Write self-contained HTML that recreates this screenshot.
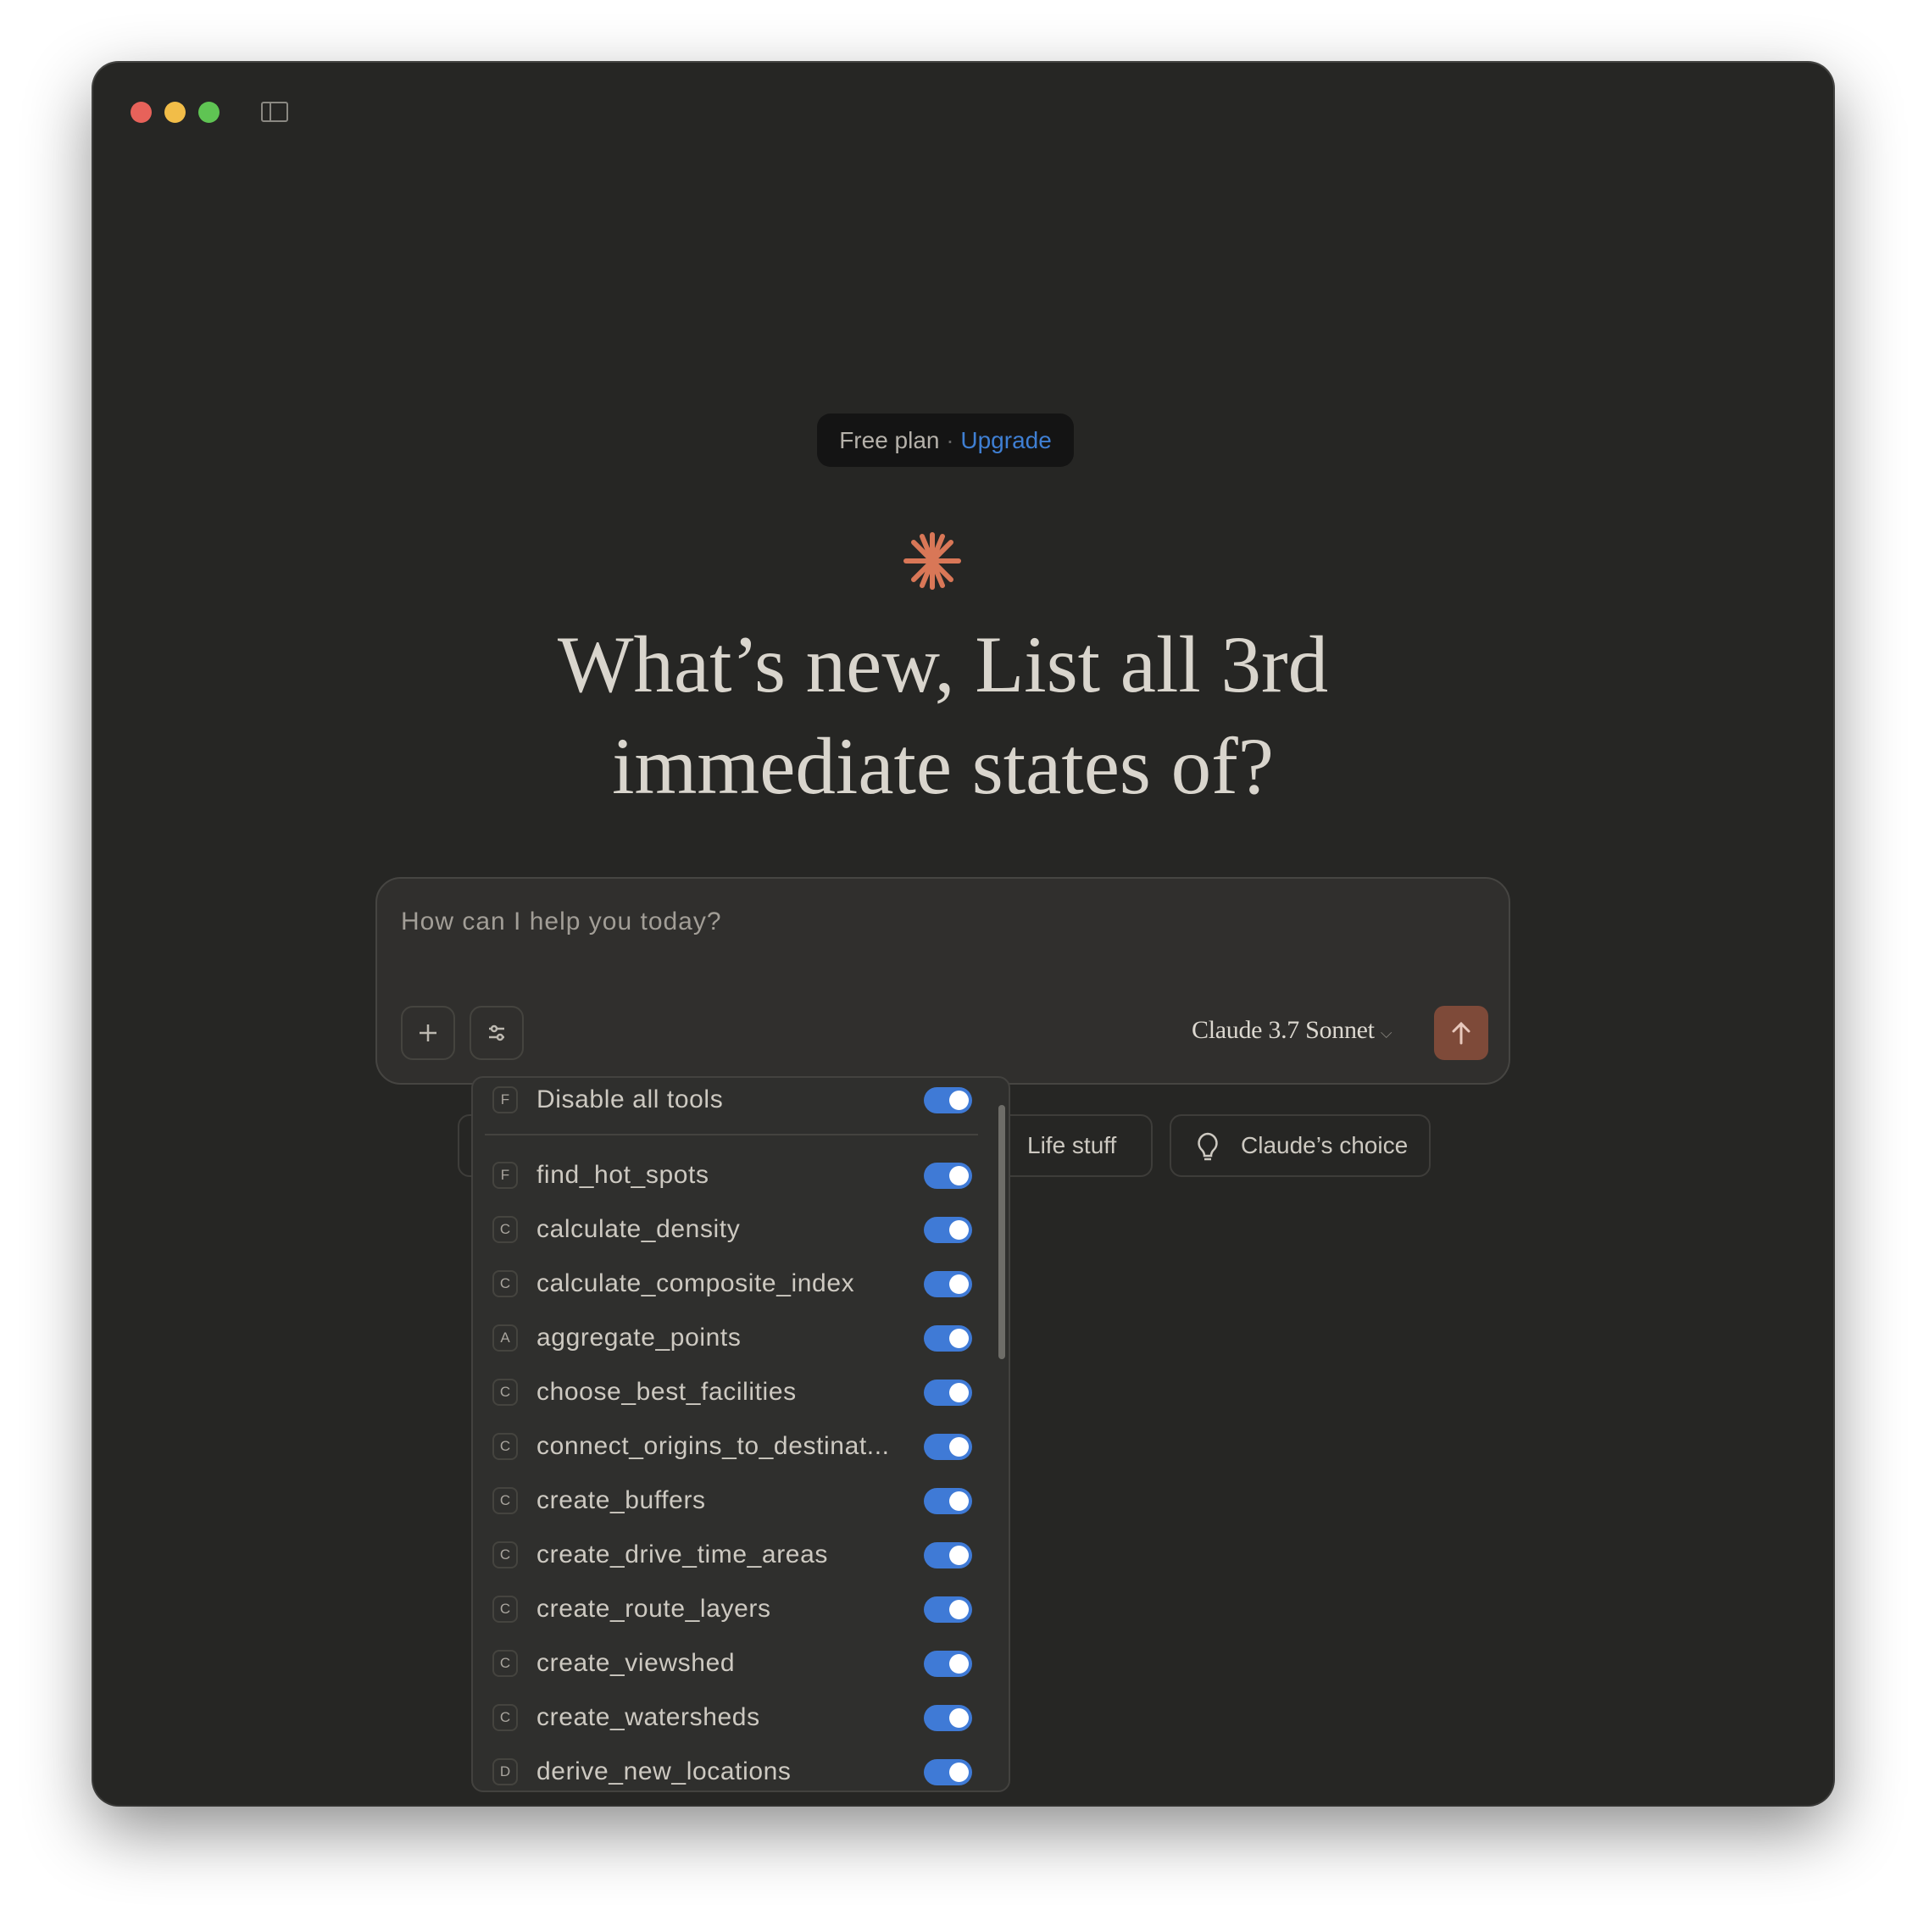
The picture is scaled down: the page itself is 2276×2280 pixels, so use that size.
<!DOCTYPE html>
<html><head><meta charset="utf-8"><style>
*{margin:0;padding:0;box-sizing:border-box}
body{width:2276px;height:2280px;background:#fff;position:relative;overflow:hidden;font-family:"Liberation Sans",sans-serif}
.win{position:absolute;left:110px;top:74px;width:2053px;height:2056px;background:#262624;border-radius:30px;box-shadow:0 30px 80px rgba(0,0,0,.45),0 0 0 2px #4a4a48;overflow:hidden}
.a{position:absolute}
.dot{position:absolute;width:25px;height:25px;border-radius:50%;top:46px}
.pill{left:854px;top:414px;width:303px;height:63px;background:#141414;border-radius:16px;color:#b5b1aa;font-size:28px;line-height:63px;text-align:center;white-space:nowrap}
h1{position:absolute;left:-24px;width:2053px;text-align:center;font-family:"Liberation Serif",serif;font-weight:400;font-size:95px;line-height:120px;color:#d9d5cd;top:650px;white-space:nowrap}
.box{left:333px;top:961px;width:1339px;height:245px;background:#302f2d;border:2px solid #464542;border-radius:30px}
.btn{position:absolute;width:64px;height:64px;border:2px solid #45443f;border-radius:14px}
.dd{left:446px;top:1196px;width:636px;height:845px;background:#2f2f2d;border:2px solid #43423f;border-radius:14px;overflow:hidden}
.row{position:absolute;left:0;width:600px;height:50px}
.bd{position:absolute;left:23px;top:10px;width:30px;height:32px;border:2px solid #45443f;border-radius:8px;color:#a9a59e;font-size:17px;text-align:center;line-height:28px}
.tx{position:absolute;left:75px;top:0;line-height:52px;font-size:30px;letter-spacing:0.6px;color:#cdc9c1;white-space:nowrap}
.tg{position:absolute;left:532px;top:11px;width:57px;height:31px;border-radius:16px;background:#3f7ad6}
.tg:after{content:"";position:absolute;right:4px;top:4px;width:23px;height:23px;border-radius:50%;background:#fff}
.chip{position:absolute;top:1241px;height:74px;border:2px solid #3e3d3a;border-radius:14px;color:#cdc9c1;font-size:28px;line-height:70px;white-space:nowrap}
</style></head><body>
<div class="win">
<div class="dot" style="left:44px;background:#e7625a"></div>
<div class="dot" style="left:84px;background:#f2bd48"></div>
<div class="dot" style="left:124px;background:#5fc453"></div>
<div class="a" style="left:198px;top:46px;width:32px;height:24px;border:2px solid #8a8882;border-radius:3px"><div style="position:absolute;left:8px;top:0;width:2px;height:20px;background:#8a8882"></div></div>

<div class="a pill">Free plan <span style="color:#666">·</span> <span style="color:#3f7fd3">Upgrade</span></div>

<svg class="a" style="left:956px;top:554px" width="68" height="68" viewBox="-34 -34 68 68">
<g stroke="#d97757" stroke-width="6" stroke-linecap="round">
<line x1="0" y1="-31" x2="0" y2="31"/><line x1="-31" y1="0" x2="31" y2="0"/>
<line x1="-22" y1="-22" x2="22" y2="22"/><line x1="22" y1="-22" x2="-22" y2="22"/>
<line x1="-12" y1="-29" x2="12" y2="29"/><line x1="12" y1="-29" x2="-12" y2="29"/>
</g></svg>

<h1>What’s new, List all 3rd<br>immediate states of?</h1>

<div class="chip" style="left:430px;width:300px"></div>
<div class="chip" style="left:1000px;width:250px;padding-left:100px">Life stuff</div>
<div class="chip" style="left:1270px;width:308px;padding-left:82px">
<svg class="a" style="left:28px;top:18px" width="30" height="38" viewBox="0 0 30 38"><path d="M15 3a11 11 0 0 0-7 19c2 2 3 4 3 7h8c0-3 1-5 3-7a11 11 0 0 0-7-19zM11 33h8" fill="none" stroke="#cdc9c1" stroke-width="2.5"/></svg>Claude’s choice</div>

<div class="a box">
<div class="a" style="left:28px;top:34px;font-size:30px;letter-spacing:1px;color:#a29e97;white-space:nowrap">How can I help you today?</div>
<div class="btn" style="left:28px;top:150px"><svg width="60" height="60" viewBox="0 0 60 60"><path d="M30 20v20M20 30h20" stroke="#bdb9b1" stroke-width="2.5"/></svg></div>
<div class="btn" style="left:109px;top:150px"><svg width="60" height="60" viewBox="0 0 60 60"><path d="M21 25h18M21 35h18" stroke="#bdb9b1" stroke-width="2.5"/><circle cx="27" cy="25" r="3" fill="#302f2d" stroke="#bdb9b1" stroke-width="2.5"/><circle cx="34" cy="35" r="3" fill="#302f2d" stroke="#bdb9b1" stroke-width="2.5"/></svg></div>
<div class="a" style="left:961px;top:162px;font-family:'Liberation Serif',serif;font-size:30px;color:#dcd8d0;letter-spacing:-0.3px;white-space:nowrap">Claude 3.7 Sonnet <span style="font-family:'Liberation Sans';font-size:18px;color:#8c8982">⌵</span></div>
<div class="a" style="left:1247px;top:150px;width:64px;height:64px;background:#7e4a39;border-radius:12px"><svg width="64" height="64" viewBox="0 0 64 64"><path d="M32 44V21M23 30l9-9 9 9" fill="none" stroke="#e8c8bc" stroke-width="3" stroke-linecap="round"/></svg></div>
</div>

<div class="a dd">
<div class="row" style="top:0"><div class="bd">F</div><div class="tx">Disable all tools</div><div class="tg"></div></div>
<div class="a" style="left:14px;top:66px;width:582px;height:2px;background:#44433f"></div>
<div class="a" style="left:620px;top:32px;width:8px;height:300px;border-radius:4px;background:#6e6d68"></div>
<div class="row" style="top:89px"><div class="bd">F</div><div class="tx">find_hot_spots</div><div class="tg"></div></div>
<div class="row" style="top:153px"><div class="bd">C</div><div class="tx">calculate_density</div><div class="tg"></div></div>
<div class="row" style="top:217px"><div class="bd">C</div><div class="tx">calculate_composite_index</div><div class="tg"></div></div>
<div class="row" style="top:281px"><div class="bd">A</div><div class="tx">aggregate_points</div><div class="tg"></div></div>
<div class="row" style="top:345px"><div class="bd">C</div><div class="tx">choose_best_facilities</div><div class="tg"></div></div>
<div class="row" style="top:409px"><div class="bd">C</div><div class="tx">connect_origins_to_destinat...</div><div class="tg"></div></div>
<div class="row" style="top:473px"><div class="bd">C</div><div class="tx">create_buffers</div><div class="tg"></div></div>
<div class="row" style="top:537px"><div class="bd">C</div><div class="tx">create_drive_time_areas</div><div class="tg"></div></div>
<div class="row" style="top:601px"><div class="bd">C</div><div class="tx">create_route_layers</div><div class="tg"></div></div>
<div class="row" style="top:665px"><div class="bd">C</div><div class="tx">create_viewshed</div><div class="tg"></div></div>
<div class="row" style="top:729px"><div class="bd">C</div><div class="tx">create_watersheds</div><div class="tg"></div></div>
<div class="row" style="top:793px"><div class="bd">D</div><div class="tx">derive_new_locations</div><div class="tg"></div></div>
</div>
</div>
</body></html>
